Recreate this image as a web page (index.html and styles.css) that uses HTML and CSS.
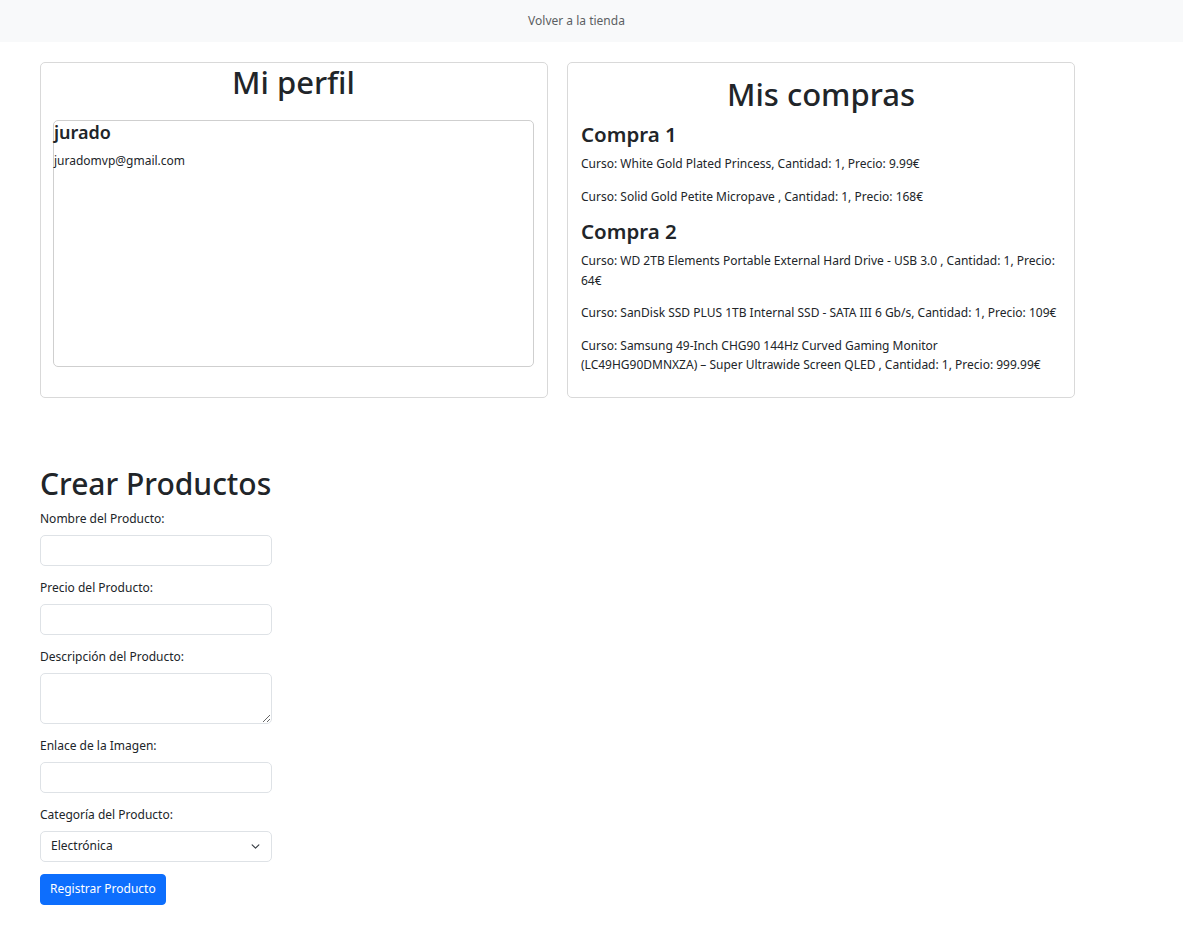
FILE: index.html
```html
<!DOCTYPE html>
<html lang="es">
<head>
<meta charset="utf-8">
<title>Mi perfil</title>
<link rel="stylesheet" href="styles.css">
</head>
<body>
<nav class="topbar">
  <a class="back-link" href="#">Volver a la tienda</a>
</nav>
<main class="page">
  <section class="cards-row">
    <div class="card card-profile">
      <h2 class="card-title">Mi perfil</h2>
      <div class="profile-box">
        <h5 class="profile-name">jurado</h5>
        <p class="profile-email">juradomvp@gmail.com</p>
      </div>
    </div>
    <div class="card card-orders">
      <h2 class="card-title">Mis compras</h2>
      <h4 class="order-title">Compra 1</h4>
      <p class="order-line">Curso: White Gold Plated Princess, Cantidad: 1, Precio: 9.99€</p>
      <p class="order-line">Curso: Solid Gold Petite Micropave , Cantidad: 1, Precio: 168€</p>
      <h4 class="order-title">Compra 2</h4>
      <p class="order-line">Curso: WD 2TB Elements Portable External Hard Drive - USB 3.0 , Cantidad: 1, Precio: 64€</p>
      <p class="order-line">Curso: SanDisk SSD PLUS 1TB Internal SSD - SATA III 6 Gb/s, Cantidad: 1, Precio: 109€</p>
      <p class="order-line">Curso: Samsung 49-Inch CHG90 144Hz Curved Gaming Monitor<br>(LC49HG90DMNXZA) – Super Ultrawide Screen QLED , Cantidad: 1, Precio: 999.99€</p>
    </div>
  </section>

  <section class="create">
    <h2 class="create-title">Crear Productos</h2>
    <form class="create-form">
      <div class="field">
        <label class="field-label" for="nombre">Nombre del Producto:</label>
        <input class="field-input" id="nombre" type="text">
      </div>
      <div class="field">
        <label class="field-label" for="precio">Precio del Producto:</label>
        <input class="field-input" id="precio" type="text">
      </div>
      <div class="field">
        <label class="field-label" for="desc">Descripción del Producto:</label>
        <textarea class="field-input field-textarea" id="desc"></textarea>
      </div>
      <div class="field">
        <label class="field-label" for="img">Enlace de la Imagen:</label>
        <input class="field-input" id="img" type="text">
      </div>
      <div class="field">
        <label class="field-label" for="cat">Categoría del Producto:</label>
        <select class="field-input field-select" id="cat">
          <option>Electrónica</option>
          <option>Joyería</option>
          <option>Ropa</option>
        </select>
      </div>
      <button class="submit-btn" type="button">Registrar Producto</button>
    </form>
  </section>
</main>
</body>
</html>
```

FILE: styles.css
```css
* { box-sizing: border-box; }

html, body {
  margin: 0;
  padding: 0;
  background: #fff;
}

body {
  font-family: "Noto Sans", "Open Sans", sans-serif;
  font-size: 12px;
  line-height: 19.5px;
  color: #212529;
}

.topbar {
  height: 42px;
  background: #f8f9fa;
  display: flex;
  align-items: center;
  justify-content: center;
  padding-right: 30px;
}

.back-link {
  color: #5c5f63;
  text-decoration: none;
  font-size: 12px;
  line-height: 19.5px;
}

.page {
  padding: 0 40px;
}

.cards-row {
  display: flex;
  align-items: stretch;
  gap: 19px;
  margin-top: 20px;
  width: 1035px;
}

.card {
  flex: 0 0 508px;
  border: 1px solid #d9d9d9;
  border-radius: 5px;
}

.card-title {
  margin: 0;
  text-align: center;
  font-size: 31px;
  line-height: 38px;
  font-weight: 500;
}

.card-profile {
  padding: 0 13px 20px 12px;
}

.card-profile .card-title {
  margin-bottom: 19px;
}

.profile-box {
  height: 247px;
  border: 1px solid #cfcfcf;
  border-radius: 5px;
}

.profile-name {
  margin: 0;
  font-size: 18px;
  line-height: 23px;
  font-weight: 600;
}

.profile-email {
  margin: 7px 0 0;
}

.card-orders {
  padding: 12px 13px 10px;
}

.card-orders .card-title {
  margin-bottom: 7px;
}

.order-title {
  margin: 0 0 6px;
  font-size: 20.5px;
  line-height: 28px;
  font-weight: 600;
}

.order-line + .order-title {
  margin-top: -2px;
}

.order-line {
  margin: 0 0 13px;
}

.order-line:last-child {
  line-height: 19px;
}

.create {
  margin-top: 67px;
}

.create-title {
  margin: 0 0 6px;
  font-size: 30px;
  line-height: 38px;
  font-weight: 500;
}

.create-form {
  display: flex;
  flex-direction: column;
  align-items: flex-start;
}

.field {
  display: flex;
  flex-direction: column;
  margin-bottom: 12px;
}

.field-label {
  line-height: 20px;
  margin-bottom: 6px;
}

.field-input {
  width: 232px;
  height: 31px;
  border: 1px solid #dee2e6;
  border-radius: 5px;
  font: inherit;
  color: #212529;
  background: #fff;
  padding: 4px 10px;
}

.field-textarea {
  height: 51px;
  resize: vertical;
}

.field-select {
  appearance: none;
  -webkit-appearance: none;
  padding-right: 32px;
  background-image: url("data:image/svg+xml,%3csvg xmlns='http://www.w3.org/2000/svg' viewBox='0 0 16 16'%3e%3cpath fill='none' stroke='%23343a40' stroke-linecap='round' stroke-linejoin='round' stroke-width='2' d='m2 5 6 6 6-6'/%3e%3c/svg%3e");
  background-repeat: no-repeat;
  background-position: right 10px center;
  background-size: 11px 9px;
}

.submit-btn {
  margin-top: 0;
  height: 31px;
  padding: 0 9px;
  border: 1px solid #0d6efd;
  border-radius: 4px;
  background: #0d6efd;
  color: #fff;
  font: inherit;
  cursor: pointer;
}
```
